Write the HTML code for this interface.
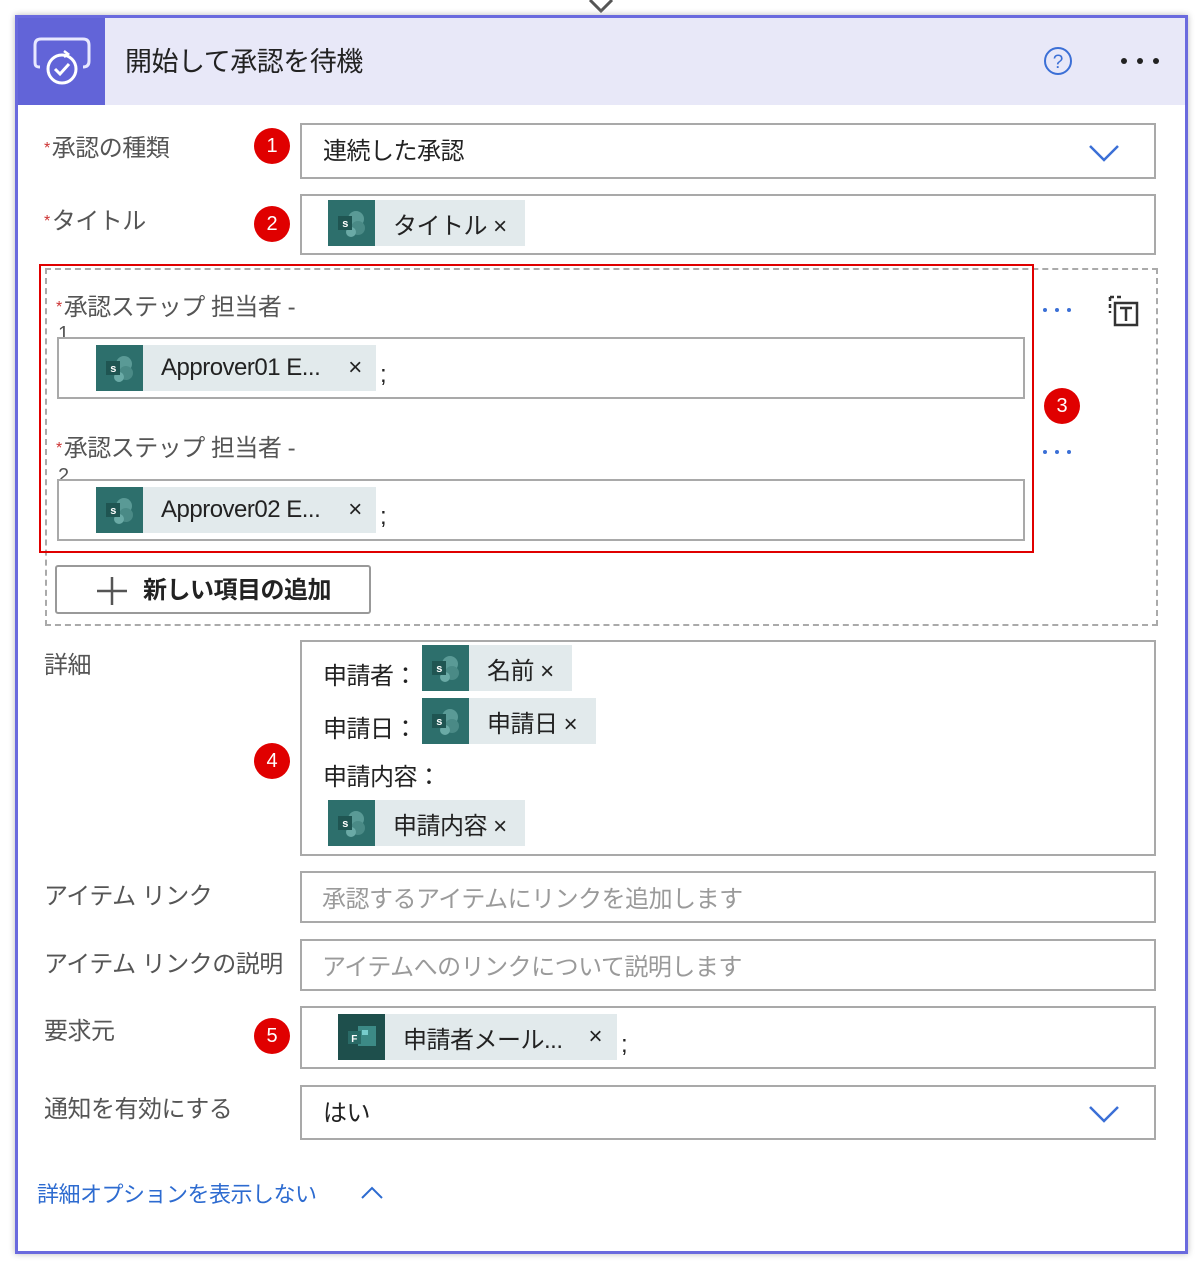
<!DOCTYPE html>
<html><head><meta charset="utf-8"><style>
*{margin:0;padding:0;box-sizing:border-box}
body{width:1200px;height:1269px;background:#fff;position:relative;overflow:hidden;font-family:"Liberation Sans","Noto Sans CJK JP",sans-serif;color:#222}
.a{position:absolute}
.t{position:absolute;line-height:30px;white-space:nowrap;font-size:24px;letter-spacing:-0.5px}
.lbl{color:#555}
.req{color:#c33;font-size:16px;vertical-align:top;margin-right:2px}
.box{position:absolute;border:2px solid #a9a9a9;background:#fff}
.badge{position:absolute;width:36px;height:36px;border-radius:50%;background:#e00000;color:#fff;font-size:20px;text-align:center;line-height:36px}
.tok{position:absolute;height:46px;background:#e2eaec;display:flex;align-items:center;font-size:24px;white-space:nowrap;letter-spacing:-0.5px}
.tok .ic{width:47px;height:46px;background:#2d6f6c;position:relative;flex:none;margin-right:18px}
.tok .ic svg{position:absolute;left:8px;top:8px}
.ph{color:#9a9a9a}
</style></head><body>
<svg class="a" style="left:586px;top:0" width="30" height="16"><path d="M4 0 L15 11 L26 0" fill="none" stroke="#555" stroke-width="3"/></svg>
<div class="a" style="left:15px;top:15px;width:1173px;height:1239px;border:3px solid #6a6ade;box-shadow:0 0 6px #bbb"></div>
<div class="a" style="left:18px;top:18px;width:1167px;height:87px;background:#e8e8f8"></div>
<div class="a" style="left:18px;top:18px;width:87px;height:87px;background:#6264d8"></div>
<svg class="a" style="left:30px;top:35px" width="64" height="56" viewBox="0 0 64 56"><path d="M10 32 C5 32 5 30 5 26 V10 C5 6 7 4 11 4 H53 C57 4 59 6 59 10 V26 C59 30 57 32 53 32" fill="none" stroke="#e8e8ff" stroke-width="3"/><circle cx="32" cy="34" r="14" fill="#6264d8" stroke="#fff" stroke-width="3"/><path d="M25 34 l5 5 l9 -10" fill="none" stroke="#fff" stroke-width="3"/><path d="M34 16 l4 3 l-4 3" fill="none" stroke="#fff" stroke-width="2.5"/></svg>
<div class="t" style="left:125px;top:47px;font-size:27px;color:#222">開始して承認を待機</div>
<svg class="a" style="left:1042px;top:45px" width="32" height="32"><circle cx="16" cy="16" r="13" fill="none" stroke="#3b6fd6" stroke-width="2"/><text x="16" y="23" font-size="19" text-anchor="middle" fill="#3b6fd6" font-family="Liberation Sans">?</text></svg>
<svg class="a" style="left:1118px;top:55px" width="44" height="12"><circle cx="6" cy="6" r="3" fill="#222"/><circle cx="22" cy="6" r="3" fill="#222"/><circle cx="38" cy="6" r="3" fill="#222"/></svg>

<div class="t lbl" style="left:44px;top:134px"><span class="req">*</span>承認の種類</div>
<div class="badge" style="left:254px;top:128px">1</div>
<div class="box" style="left:300px;top:123px;width:856px;height:56px"></div>
<div class="t" style="left:323px;top:137px">連続した承認</div>
<svg class="a" style="left:1088px;top:143px" width="32" height="20"><path d="M2 3 L16 17 L30 3" fill="none" stroke="#3b6fd6" stroke-width="2.5"/></svg>

<div class="t lbl" style="left:44px;top:207px"><span class="req">*</span>タイトル</div>
<div class="badge" style="left:254px;top:206px">2</div>
<div class="box" style="left:300px;top:194px;width:856px;height:61px"></div>
<div class="tok" style="left:328px;top:200px;width:197px"><div class="ic"><svg width="32" height="30"><circle cx="20" cy="11" r="8" fill="#5a9a96"/><circle cx="22" cy="20" r="7" fill="#4a8a86"/><circle cx="15" cy="24" r="5" fill="#6aaaa6"/><rect x="2" y="8" width="14" height="14" fill="#1f5552"/><text x="9" y="19" font-size="11" fill="#fff" text-anchor="middle" font-weight="bold">s</text></svg></div>タイトル&nbsp;×</div>

<div class="a" style="left:45px;top:268px;width:1113px;height:358px;border:2px dashed #aaa"></div>
<div class="t lbl" style="left:56px;top:293px"><span class="req">*</span>承認ステップ 担当者 -</div>
<div class="a lbl" style="left:58px;top:324px;font-size:20px;line-height:20px;color:#555">1</div>
<div class="box" style="left:57px;top:337px;width:968px;height:62px"></div>
<div class="tok" style="left:96px;top:345px;width:280px"><div class="ic"><svg width="32" height="30"><circle cx="20" cy="11" r="8" fill="#5a9a96"/><circle cx="22" cy="20" r="7" fill="#4a8a86"/><circle cx="15" cy="24" r="5" fill="#6aaaa6"/><rect x="2" y="8" width="14" height="14" fill="#1f5552"/><text x="9" y="19" font-size="11" fill="#fff" text-anchor="middle" font-weight="bold">s</text></svg></div>Approver01 E...<span style="margin-left:28px">×</span></div>
<div class="t" style="left:380px;top:360px">;</div>
<div class="t lbl" style="left:56px;top:434px"><span class="req">*</span>承認ステップ 担当者 -</div>
<div class="a lbl" style="left:58px;top:466px;font-size:20px;line-height:20px;color:#555">2</div>
<div class="box" style="left:57px;top:479px;width:968px;height:62px"></div>
<div class="tok" style="left:96px;top:487px;width:280px"><div class="ic"><svg width="32" height="30"><circle cx="20" cy="11" r="8" fill="#5a9a96"/><circle cx="22" cy="20" r="7" fill="#4a8a86"/><circle cx="15" cy="24" r="5" fill="#6aaaa6"/><rect x="2" y="8" width="14" height="14" fill="#1f5552"/><text x="9" y="19" font-size="11" fill="#fff" text-anchor="middle" font-weight="bold">s</text></svg></div>Approver02 E...<span style="margin-left:28px">×</span></div>
<div class="t" style="left:380px;top:502px">;</div>
<div class="a" style="left:39px;top:264px;width:995px;height:289px;border:2px solid #e00000"></div>
<svg class="a" style="left:1040px;top:304px" width="36" height="12"><circle cx="5" cy="6" r="2" fill="#3b6fd6"/><circle cx="17" cy="6" r="2" fill="#3b6fd6"/><circle cx="29" cy="6" r="2" fill="#3b6fd6"/></svg>
<svg class="a" style="left:1040px;top:446px" width="36" height="12"><circle cx="5" cy="6" r="2" fill="#3b6fd6"/><circle cx="17" cy="6" r="2" fill="#3b6fd6"/><circle cx="29" cy="6" r="2" fill="#3b6fd6"/></svg>
<svg class="a" style="left:1106px;top:293px" width="36" height="36"><path d="M4 4 H18 M4 4 V20" fill="none" stroke="#333" stroke-width="2.5" stroke-dasharray="4 3"/><rect x="9" y="10" width="22" height="22" fill="#fff" stroke="#333" stroke-width="2.5"/><path d="M14 15 H26 M20 15 V28" stroke="#333" stroke-width="2.5"/></svg>
<div class="badge" style="left:1044px;top:388px">3</div>
<div class="a" style="left:55px;top:565px;width:316px;height:49px;border:2px solid #999;border-radius:3px"></div>
<svg class="a" style="left:95px;top:575px" width="34" height="32"><path d="M17 2 V30 M2 16 H32" stroke="#555" stroke-width="2.5"/></svg>
<div class="t" style="left:143px;top:576px;font-weight:bold">新しい項目の追加</div>

<div class="t lbl" style="left:44px;top:651px">詳細</div>
<div class="badge" style="left:254px;top:743px">4</div>
<div class="box" style="left:300px;top:640px;width:856px;height:216px"></div>
<div class="t" style="left:323px;top:662px">申請者：</div>
<div class="tok" style="left:422px;top:645px;width:150px"><div class="ic"><svg width="32" height="30"><circle cx="20" cy="11" r="8" fill="#5a9a96"/><circle cx="22" cy="20" r="7" fill="#4a8a86"/><circle cx="15" cy="24" r="5" fill="#6aaaa6"/><rect x="2" y="8" width="14" height="14" fill="#1f5552"/><text x="9" y="19" font-size="11" fill="#fff" text-anchor="middle" font-weight="bold">s</text></svg></div>名前&nbsp;×</div>
<div class="t" style="left:323px;top:715px">申請日：</div>
<div class="tok" style="left:422px;top:698px;width:174px"><div class="ic"><svg width="32" height="30"><circle cx="20" cy="11" r="8" fill="#5a9a96"/><circle cx="22" cy="20" r="7" fill="#4a8a86"/><circle cx="15" cy="24" r="5" fill="#6aaaa6"/><rect x="2" y="8" width="14" height="14" fill="#1f5552"/><text x="9" y="19" font-size="11" fill="#fff" text-anchor="middle" font-weight="bold">s</text></svg></div>申請日&nbsp;×</div>
<div class="t" style="left:323px;top:763px">申請内容：</div>
<div class="tok" style="left:328px;top:800px;width:197px"><div class="ic"><svg width="32" height="30"><circle cx="20" cy="11" r="8" fill="#5a9a96"/><circle cx="22" cy="20" r="7" fill="#4a8a86"/><circle cx="15" cy="24" r="5" fill="#6aaaa6"/><rect x="2" y="8" width="14" height="14" fill="#1f5552"/><text x="9" y="19" font-size="11" fill="#fff" text-anchor="middle" font-weight="bold">s</text></svg></div>申請内容&nbsp;×</div>

<div class="t lbl" style="left:44px;top:882px">アイテム リンク</div>
<div class="box" style="left:300px;top:871px;width:856px;height:52px"></div>
<div class="t ph" style="left:322px;top:885px">承認するアイテムにリンクを追加します</div>
<div class="t lbl" style="left:44px;top:950px">アイテム リンクの説明</div>
<div class="box" style="left:300px;top:939px;width:856px;height:52px"></div>
<div class="t ph" style="left:322px;top:953px">アイテムへのリンクについて説明します</div>

<div class="t lbl" style="left:44px;top:1017px">要求元</div>
<div class="badge" style="left:254px;top:1018px">5</div>
<div class="box" style="left:300px;top:1006px;width:856px;height:63px"></div>
<div class="tok" style="left:338px;top:1014px;width:279px"><div class="ic" style="background:#1e4f4c"><svg width="32" height="30"><rect x="12" y="4" width="18" height="20" fill="#3c8a86"/><rect x="16" y="8" width="6" height="5" fill="#7cc"/><rect x="2" y="9" width="13" height="13" fill="#2a6b67"/><text x="8" y="20" font-size="10" fill="#fff" text-anchor="middle" font-weight="bold">F</text></svg></div>申請者メール...<span style="margin-left:26px">×</span></div>
<div class="t" style="left:621px;top:1030px">;</div>

<div class="t lbl" style="left:44px;top:1095px">通知を有効にする</div>
<div class="box" style="left:300px;top:1085px;width:856px;height:55px"></div>
<div class="t" style="left:323px;top:1099px">はい</div>
<svg class="a" style="left:1088px;top:1104px" width="32" height="20"><path d="M2 3 L16 17 L30 3" fill="none" stroke="#3b6fd6" stroke-width="2.5"/></svg>

<div class="t" style="left:37px;top:1180px;color:#2d6bd0;font-size:22px">詳細オプションを表示しない</div>
<svg class="a" style="left:360px;top:1185px" width="24" height="16"><path d="M2 13 L12 3 L22 13" fill="none" stroke="#2d6bd0" stroke-width="2"/></svg>
</body></html>
